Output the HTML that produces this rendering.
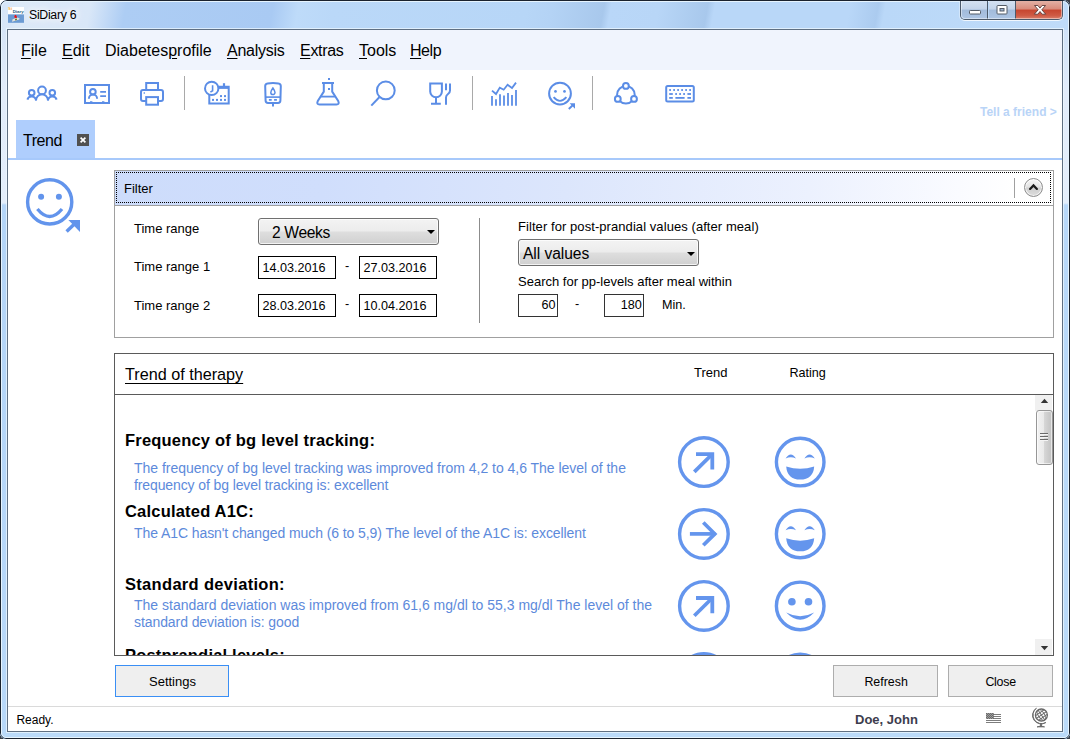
<!DOCTYPE html>
<html lang="en">
<head>
<meta charset="utf-8">
<title>SiDiary 6</title>
<style>
*{box-sizing:border-box;margin:0;padding:0}
html,body{width:1070px;height:739px;overflow:hidden;background:#fff}
body{position:relative;font-family:"Liberation Sans",sans-serif;color:#000;font-size:12px}
.abs,.t{position:absolute}
.t{white-space:nowrap;line-height:1;display:block}
#frame{position:absolute;left:0;top:0;width:1070px;height:739px;background:#b9d6f6;border-radius:7px 7px 6px 6px;overflow:hidden}
#frame .edge{position:absolute;left:0;top:0;right:0;bottom:0;border:1px solid #1a222e;border-radius:7px 7px 6px 6px}
#frame .edge2{position:absolute;left:1px;top:1px;right:1px;bottom:1px;border:1px solid #e6f4fe;border-radius:6px 6px 5px 5px}
#client{position:absolute;left:8px;top:30px;width:1054px;height:701px;background:#fff;outline:1px solid #5f6f82}
#menubar{position:absolute;left:0;top:0;width:1054px;height:40px;background:#f0f4fd}
.mi{font-size:16px;top:13px}
.mi u{text-decoration:underline;text-decoration-thickness:1px;text-underline-offset:2px}
.ico{position:absolute;overflow:visible}
.ico *{vector-effect:none}
.sep{position:absolute;width:1px;background:#a9a9a9;top:46px;height:34px}
.lbl{font-size:13px}
.inp{position:absolute;border:1px solid #000;background:#fff;height:23px}
.combo{position:absolute;border:1px solid #707070;border-radius:3px;background:linear-gradient(#f3f3f3 0%,#ececec 48%,#dedede 52%,#d0d0d0 100%);box-shadow:inset 0 0 0 1px rgba(255,255,255,.75)}
.combo i{position:absolute;width:0;height:0;border-left:4px solid transparent;border-right:4px solid transparent;border-top:4px solid #000}
.btn{position:absolute;border:1px solid #adadad;background:#efefef;height:32px}
.h{font-weight:bold;font-size:16.5px;letter-spacing:0.2px}
.b{font-size:14px;color:#5d8adb}
</style>
</head>
<body>
<div class="abs" style="left:1062px;top:0;width:8px;height:8px;background:#3a3f47"></div><div class="abs" style="left:0;top:731px;width:8px;height:8px;background:#3a3f47"></div><div class="abs" style="left:1062px;top:731px;width:8px;height:8px;background:#3a3f47"></div>
<div id="frame">
  <div class="abs" style="left:0;top:0;width:1070px;height:30px;background:linear-gradient(100deg,#d4e4f8 0px,#dce9f8 20px,#d9e7f8 90px,#adcdf4 125px,#a9caf3 270px,#bedbf9 295px,#bad8f8 330px,#b7d6f7 520px,#b4d3f5 545px,#a8c8ec 596px,#b9d7f8 603px,#b8d6f7 650px,#a8c8ec 698px,#b9d7f8 705px,#b9d7f8 838px,#abcbef 866px,#bad8f8 873px,#bfdbf9 1060px)"></div>
  <div class="abs" style="left:0;top:30px;width:8px;height:709px;background:linear-gradient(#d6e4f7 0,#e2ecf9 60px,#e3edfa 173px,#b4d5f8 175px,#b8d8f9 100%)"></div>
  <div class="abs" style="left:1062px;top:30px;width:8px;height:709px;background:linear-gradient(#d0e2f8 0,#e2ecfa 60px,#e4eefb 173px,#b8d8f9 175px,#badaf9 100%)"></div>
  <div class="abs" style="left:0;top:731px;width:1070px;height:8px;background:#badaf9"></div>
  <div class="abs" style="left:6px;top:28px;width:1058px;height:705px;border:1px solid rgba(240,250,255,.7)"></div>
  <div class="edge"></div><div class="edge2"></div>
</div>
<!-- title bar -->
<svg class="ico" style="left:8px;top:7px" width="16" height="16" viewBox="0 0 16 16">
  <rect x="0" y="0" width="16" height="7.4" fill="#fff"/>
  <rect x="0" y="7.4" width="16" height="8.4" fill="#6a9ad3"/>
  <text x="4.7" y="5.8" font-family="Liberation Sans, sans-serif" font-size="4.4" font-weight="bold" fill="#1d5a7c">Diary</text>
  <text x="0.1" y="3.2" font-family="Liberation Sans, sans-serif" font-size="4.2" font-weight="bold" fill="#f7ad3c">Si</text>
  <path d="M4 14.8 L4.6 12.2 L9.6 10.6 L11.6 11.4 L11.2 12.6 Z" fill="#e4e4e0"/>
  <path d="M7 12 L8.8 11.4 L9 13 L7.2 13.4 Z" fill="#6c7a28"/>
  <path d="M6.4 10.6 Q6 8.6 7.4 7.8 Q8.8 8.4 9 10.4 Q8 11.6 6.4 10.6 Z" fill="#f01010"/>
</svg>
<span class="t" id="title" style="left:29px;top:8.7px;font-size:12.3px;letter-spacing:-0.3px;text-shadow:0 0 6px #fff,0 0 10px #fff,0 0 14px #fff">SiDiary 6</span>
<div class="abs" style="left:960px;top:1px;width:103px;height:19px;border:1px solid #4c5a6b;border-top:none;border-radius:0 0 5px 5px;overflow:hidden;box-shadow:0 1px 0 rgba(255,255,255,.5),1px 1px 0 rgba(255,255,255,.35),-1px 1px 0 rgba(255,255,255,.35)">
  <div class="abs" style="left:0;top:0;width:27px;height:18px;background:linear-gradient(#d4e1f1 0,#c3d4ea 45%,#a2bbdb 50%,#adc5e4 100%);border-right:1px solid #4c5a6b"></div>
  <div class="abs" style="left:28px;top:0;width:27px;height:18px;background:linear-gradient(#d4e1f1 0,#c3d4ea 45%,#a2bbdb 50%,#adc5e4 100%);border-right:1px solid #4c5a6b"></div>
  <div class="abs" style="left:55px;top:0;width:47px;height:18px;background:linear-gradient(#e3b1a5 0,#d98b7b 45%,#c7452f 50%,#cf5a44 80%,#d9806c 100%)"></div>
  <div class="abs" style="left:0;top:-1px;width:101px;height:19px;box-shadow:inset 0 0 0 1px rgba(255,255,255,.45);border-radius:0 0 4px 4px"></div>
</div>
<svg class="ico" style="left:960px;top:0" width="103" height="20" viewBox="0 0 103 20">
  <rect x="9.5" y="10.5" width="11" height="3.5" rx="0.8" fill="#fff" stroke="#535b66" stroke-width="1"/>
  <rect x="37" y="5.5" width="10" height="8.5" rx="0.8" fill="#fff" stroke="#535b66" stroke-width="1"/>
  <rect x="40" y="8.5" width="4" height="2.5" fill="#9db4d2" stroke="#535b66" stroke-width="1"/>
  <path d="M74.5 5.5 h3.4 l2.1 2.6 l2.1 -2.6 h3.4 l-3.7 4.3 l3.9 4.4 h-3.5 l-2.2 -2.7 l-2.2 2.7 h-3.5 l3.9 -4.4 z" fill="#fff" stroke="#5a3a38" stroke-width="0.9" stroke-linejoin="round"/>
</svg>
<div id="client">
  <div id="menubar"></div>
</div>
<!--MENU-->
<span class="t mi" id="m1" style="left:21px;top:43px"><u>F</u>ile</span>
<span class="t mi" id="m2" style="left:62px;top:43px"><u>E</u>dit</span>
<span class="t mi" id="m3" style="left:105px;top:43px">Diabetes<u>p</u>rofile</span>
<span class="t mi" id="m4" style="left:227px;top:43px;letter-spacing:-0.26px"><u>A</u>nalysis</span>
<span class="t mi" id="m5" style="left:300px;top:43px;letter-spacing:-0.3px"><u>E</u>xtras</span>
<span class="t mi" id="m6" style="left:359px;top:43px"><u>T</u>ools</span>
<span class="t mi" id="m7" style="left:410px;top:43px;letter-spacing:-0.45px"><u>H</u>elp</span>
<!--TOOLBAR-->
<svg class="ico" style="left:0;top:70px" width="1070" height="50" viewBox="0 70 1070 50" fill="none" stroke="#5b8de6" stroke-width="2" stroke-linecap="butt" stroke-linejoin="miter">
  <!-- people -->
  <circle cx="42" cy="90.4" r="3.9"/>
  <path d="M36 100.6 a6 6.3 0 0 1 12 0"/>
  <circle cx="31.7" cy="92.7" r="2.8"/>
  <path d="M27.4 99.6 A4.4 4.4 0 0 1 36 100.4"/>
  <circle cx="52.3" cy="92.7" r="2.8"/>
  <path d="M56.6 99.6 A4.4 4.4 0 0 0 48 100.4"/>
  <!-- id card -->
  <rect x="85" y="85" width="24" height="18"/>
  <circle cx="92.9" cy="91.7" r="2.8"/>
  <path d="M88.9 98.8 a4.1 4.3 0 0 1 8.2 0"/>
  <path d="M100.2 91.8 h5.8 M100.2 96.1 h5.8" stroke-width="1.7"/>
  <path d="M90 102 h2.4 M102 102 h2.4" stroke-width="1.4"/>
  <!-- printer -->
  <rect x="146.2" y="83" width="11.8" height="7"/>
  <rect x="141" y="89.9" width="22" height="11.2" rx="2"/>
  <rect x="146.2" y="97.1" width="11.8" height="7.6" fill="#fff"/>
  <rect x="143.6" y="92.3" width="1.4" height="1.4" fill="#5b8de6" stroke="none"/>
  <!-- clock calendar -->
  <path d="M216 86.8 H228.7 V103.6 H209.3 V95"/>
  <path d="M217 87.6 H228.7" stroke-width="2.6"/>
  <path d="M224 83.2 v3" stroke-width="2.2"/>
  <circle cx="211.7" cy="88.4" r="6.7" fill="#fff"/>
  <path d="M212.6 85.3 v5.4 l-2.2 1.4" stroke-width="1.6"/>
  <g fill="#5b8de6" stroke="none">
    <rect x="220" y="95.1" width="2" height="2"/><rect x="224" y="95.1" width="2" height="2"/>
    <rect x="212" y="98.9" width="2" height="2"/><rect x="216" y="98.9" width="2" height="2"/><rect x="220" y="98.9" width="2" height="2"/><rect x="224" y="98.9" width="2" height="2"/>
  </g>
  <!-- glucose meter -->
  <path d="M265.2 86.2 Q265.2 84 267.4 83.6 Q273 82.4 278.6 83.6 Q280.8 84 280.8 86.2 L280.4 100.6 Q280.4 103 278 103 H268 Q265.6 103 265.6 100.6 Z"/>
  <path d="M265.6 97.1 H280.4" stroke-width="1.6"/>
  <path d="M273 103 v3.4" stroke-width="2"/>
  <path d="M272.9 88 Q275 91 275 92.5 A2.1 2.1 0 0 1 270.8 92.5 Q270.8 91 272.9 88 Z" stroke-width="1.5"/>
  <path d="M268.9 99.9 h2.8 M274.1 99.9 h2.8" stroke-width="1.8"/>
  <!-- flask -->
  <path d="M322 83 H334"/>
  <path d="M323.8 83 V91.6 L317.8 101 Q316.2 104.4 319.6 104.6 H336.4 Q339.8 104.4 338.2 101 L332.2 91.6 V83"/>
  <path d="M320.8 96.6 H335.2" stroke-width="1.8"/>
  <rect x="328" y="78" width="2" height="2" fill="#5b8de6" stroke="none"/>
  <rect x="328" y="88" width="2" height="2" fill="#5b8de6" stroke="none"/>
  <!-- magnifier -->
  <circle cx="385.8" cy="90.4" r="8.9"/>
  <path d="M379.3 97.3 L371.3 105.6"/>
  <!-- glass & fork -->
  <path d="M430.2 83.5 H441.9 V91.5 A5.85 5.85 0 0 1 430.2 91.5 Z"/>
  <path d="M436 97.4 V103 M431 103.7 H440.8"/>
  <path d="M446 83.4 V90.2" />
  <path d="M450 83.4 V90.4 Q450 92.6 448 94 Q446 95.4 446 97.4 V104.8"/>
  <!-- chart -->
  <g stroke-width="1.8">
    <path d="M492 96 V105.7 M496 99.2 V105.7 M500 94.2 V105.7 M504 95.5 V105.7 M508 93 V105.7 M512 95 V105.7 M516 90 V105.7"/>
  </g>
  <path d="M492 90.6 L496 94 L499.8 87.6 L503.7 89.7 L507.6 84.8 L512 88 L516 82.6" stroke-width="1.8"/>
  <!-- smiley small -->
  <circle cx="560" cy="93.6" r="10.9"/>
  <circle cx="555.5" cy="91.4" r="1.35" fill="#5b8de6" stroke="none"/>
  <circle cx="564.5" cy="91.4" r="1.35" fill="#5b8de6" stroke="none"/>
  <path d="M553.6 97.2 Q560 104.6 566.4 97.2" stroke-width="1.9"/>
  <path d="M569.6 103.2 H575 V108.8 Z" fill="#5b8de6" stroke="none"/>
  <path d="M568.8 109 L573.5 104.5" stroke-width="1.9"/>
  <!-- share -->
  <circle cx="625.9" cy="94.8" r="8.8"/>
  <circle cx="625.9" cy="85.9" r="2.9" fill="#fff"/>
  <circle cx="617.8" cy="98.9" r="2.9" fill="#fff"/>
  <circle cx="634" cy="98.9" r="2.9" fill="#fff"/>
  <!-- keyboard -->
  <rect x="666.2" y="86" width="27.6" height="15.6" rx="1.5"/>
  <g fill="#5b8de6" stroke="none">
    <rect x="669.2" y="89.1" width="1.8" height="1.8"/><rect x="673.2" y="89.1" width="1.8" height="1.8"/><rect x="677.2" y="89.1" width="1.8" height="1.8"/><rect x="681.2" y="89.1" width="1.8" height="1.8"/><rect x="685.2" y="89.1" width="1.8" height="1.8"/><rect x="689.2" y="89.1" width="1.8" height="1.8"/>
    <rect x="669.2" y="93.1" width="3.6" height="1.8"/><rect x="675.2" y="93.1" width="1.8" height="1.8"/><rect x="679.2" y="93.1" width="1.8" height="1.8"/><rect x="683.2" y="93.1" width="1.8" height="1.8"/><rect x="687.4" y="93.1" width="3.6" height="1.8"/>
    <rect x="669.2" y="97" width="3.6" height="1.8"/><rect x="675.4" y="97" width="9.2" height="1.8"/><rect x="687.4" y="97" width="3.6" height="1.8"/>
  </g>
</svg>
<div class="sep" style="left:184px;top:76px"></div>
<div class="sep" style="left:472px;top:76px"></div>
<div class="sep" style="left:592px;top:76px"></div>
<span class="t" id="tell" style="left:980px;top:106.4px;font-size:12px;font-weight:bold;color:#b9d4f7">Tell a friend &gt;</span>
<!--TAB-->
<div class="abs" style="left:16px;top:120px;width:79px;height:39px;background:#afcefd"></div>
<div class="abs" style="left:8px;top:158px;width:1054px;height:2px;background:#a7c9fb"></div>
<span class="t" id="tabt" style="left:23px;top:132.5px;font-size:16px;letter-spacing:-0.45px">Trend</span>
<div class="abs" style="left:77px;top:134px;width:12px;height:12px;background:#505050"></div>
<svg class="ico" style="left:77px;top:134px" width="12" height="12" viewBox="0 0 12 12"><path d="M3.6 3.6 L8.4 8.4 M8.4 3.6 L3.6 8.4" stroke="#fff" stroke-width="1.7"/></svg>
<svg class="ico" style="left:20px;top:172px" width="70" height="66" viewBox="20 172 70 66" fill="none" stroke="#6294ec" stroke-width="3.4">
  <circle cx="49.7" cy="201.9" r="22.1"/>
  <circle cx="41.1" cy="196.8" r="3" fill="#6294ec" stroke="none"/>
  <circle cx="58.9" cy="196.8" r="3" fill="#6294ec" stroke="none"/>
  <path d="M37.4 209 Q49.7 224 62 209" stroke-width="3.3"/>
  <path d="M68.4 220 H80 V232 Z" fill="#6294ec" stroke="none"/>
  <path d="M66.6 231.6 L76 222.6" stroke-width="3.4"/>
</svg>
<!--FILTER-->
<div class="abs" style="left:114px;top:170px;width:940px;height:168px;border:1px solid #a0a0a0;background:#fff"></div>
<div class="abs" style="left:115px;top:171px;width:938px;height:35px;background:linear-gradient(90deg,#cddcfb 0,#d0defc 22%,#dce6fc 48%,#ecf1fe 74%,#fafbff 90%,#fff 96%);border-bottom:1px solid #a0a0a0"></div>
<div class="abs" style="left:116px;top:172px;width:935px;height:31px;border:1px dotted #000"></div>
<span class="t" id="filt" style="left:124px;top:182px;font-size:13px">Filter</span>
<div class="abs" style="left:1014px;top:178px;width:1px;height:20px;background:#a0a0a0"></div>
<div class="abs" style="left:1024px;top:178px;width:19px;height:19px;border-radius:50%;border:1px solid #8e8e8e;background:linear-gradient(#f6f6f6 0,#e4e4e4 45%,#cfcfcf 55%,#dcdcdc 100%);box-shadow:inset 0 0 0 1px rgba(255,255,255,.7)"></div>
<svg class="ico" style="left:1024px;top:178px" width="19" height="19" viewBox="0 0 19 19"><path d="M6.1 10.9 L9.5 7.4 L12.9 10.9" fill="none" stroke="#1a1a1a" stroke-width="2.2" stroke-linecap="round"/></svg>

<span class="t lbl" id="l1" style="left:134px;top:222px">Time range</span>
<span class="t lbl" id="l2" style="left:134px;top:260px">Time range 1</span>
<span class="t lbl" id="l3" style="left:134px;top:299px">Time range 2</span>
<div class="combo" style="left:258px;top:218px;width:181px;height:27px"><i style="left:168px;top:11px"></i></div>
<span class="t" id="c1" style="left:272px;top:225px;font-size:15.6px;letter-spacing:-0.35px">2 Weeks</span>
<div class="inp" style="left:258px;top:256px;width:78px"></div>
<div class="inp" style="left:359px;top:256px;width:78px"></div>
<div class="inp" style="left:258px;top:294px;width:78px"></div>
<div class="inp" style="left:359px;top:294px;width:78px"></div>
<span class="t" id="d1" style="left:262.4px;top:261.6px;font-size:12.6px">14.03.2016</span>
<span class="t" id="d2" style="left:363.4px;top:261.6px;font-size:12.6px">27.03.2016</span>
<span class="t" id="d3" style="left:262.4px;top:299.7px;font-size:12.6px">28.03.2016</span>
<span class="t" id="d4" style="left:363.4px;top:299.7px;font-size:12.6px">10.04.2016</span>
<span class="t" id="h1" style="left:345px;top:260px;font-size:12.6px">-</span>
<span class="t" id="h2" style="left:345px;top:298px;font-size:12.6px">-</span>
<div class="abs" style="left:479px;top:218px;width:1px;height:105px;background:#8c8c8c"></div>
<span class="t lbl" id="l4" style="left:518px;top:220px;letter-spacing:0.07px">Filter for post-prandial values (after meal)</span>
<div class="combo" style="left:518px;top:239px;width:181px;height:27px"><i style="left:168px;top:12px"></i></div>
<span class="t" id="c2" style="left:523px;top:246px;font-size:15.6px;letter-spacing:-0.05px">All values</span>
<span class="t lbl" id="l5" style="left:518px;top:275px">Search for pp-levels after meal within</span>
<div class="inp" style="left:518px;top:294px;width:40px;border-color:#333"></div>
<div class="inp" style="left:604px;top:294px;width:40px;border-color:#333"></div>
<span class="t" id="n1" style="left:541.5px;top:299px;font-size:12.6px">60</span>
<span class="t" id="n2" style="left:620.8px;top:299px;font-size:12.6px">180</span>
<span class="t" id="h3" style="left:575px;top:298px;font-size:12.6px">-</span>
<span class="t lbl" id="l6" style="left:662px;top:299px;font-size:12.6px">Min.</span>
<!--TREND-->
<div class="abs" style="left:114px;top:353px;width:940px;height:303px;border:1px solid #5a5a5a;background:#fff;overflow:hidden"></div>
<div class="abs" style="left:115px;top:394px;width:938px;height:1px;background:#5a5a5a"></div>
<span class="t" id="tt" style="left:125px;top:366px;font-size:16.2px;text-decoration:underline;text-decoration-thickness:1px;text-underline-offset:2.6px;text-decoration-skip-ink:none">Trend of therapy</span>
<span class="t lbl" id="th1" style="left:694px;top:366px">Trend</span>
<span class="t lbl" id="th2" style="left:789.4px;top:366.5px;font-size:12.6px">Rating</span>
<div class="abs" style="left:115px;top:395px;width:938px;height:260px;overflow:hidden">
  <span class="t h" id="s1" style="left:10px;top:37px">Frequency of bg level tracking:</span>
  <span class="t b" id="b1" style="left:19px;top:66px;letter-spacing:-0.025px">The frequency of bg level tracking was improved from 4,2 to 4,6 The level of the</span>
  <span class="t b" id="b2" style="left:19px;top:83px;letter-spacing:-0.11px">frequency of bg level tracking is: excellent</span>
  <span class="t h" id="s2" style="left:10px;top:108px">Calculated A1C:</span>
  <span class="t b" id="b3" style="left:19px;top:131px;letter-spacing:-0.08px">The A1C hasn't changed much (6 to 5,9) The level of the A1C is: excellent</span>
  <span class="t h" id="s3" style="left:10px;top:181px;letter-spacing:0.31px">Standard deviation:</span>
  <span class="t b" id="b4" style="left:19px;top:203px">The standard deviation was improved from 61,6 mg/dl to 55,3 mg/dl The level of the</span>
  <span class="t b" id="b5" style="left:19px;top:220px;letter-spacing:-0.08px">standard deviation is: good</span>
  <span class="t h" id="s4" style="left:10px;top:252px">Postprandial levels:</span>
  <svg class="ico" style="left:0;top:0" width="938" height="320" viewBox="115 395 938 320" fill="none" stroke="#6495ed" stroke-width="3.4">
  <circle cx="703.9" cy="462.1" r="24.3"/><path d="M694.3 471.9 L711.5 454.9" stroke-width="3.7"/><path d="M696.0 454.2 H712.3 V469.5" stroke-width="3.8" stroke-linejoin="miter"/>
  <circle cx="800.2" cy="462.1" r="23.8"/>
  <path d="M786.2 466.40000000000003 Q800.2 471.3 814.2 466.40000000000003 Q813.2 479.5 800.2 479.5 Q787.2 479.5 786.2 466.40000000000003 Z" fill="#6495ed" stroke="none"/>
  <path d="M785.6 458.5 Q790.8000000000001 450.5 796.0 458.5 Q790.8000000000001 455.90000000000003 785.6 458.5 Z" fill="#6495ed" stroke="none"/>
  <path d="M804.4000000000001 458.5 Q809.6 450.5 814.8000000000001 458.5 Q809.6 455.90000000000003 804.4000000000001 458.5 Z" fill="#6495ed" stroke="none"/>
  <circle cx="703.9" cy="533.9" r="24.3"/><path d="M689.9 533.9 H715.4" stroke-width="3.7"/><path d="M703.3 522.5 L714.8 533.9 L703.3 545.3" stroke-width="3.7"/>
  <circle cx="800.2" cy="533.9" r="23.8"/>
  <path d="M786.2 538.1999999999999 Q800.2 543.1 814.2 538.1999999999999 Q813.2 551.3 800.2 551.3 Q787.2 551.3 786.2 538.1999999999999 Z" fill="#6495ed" stroke="none"/>
  <path d="M785.6 530.3 Q790.8000000000001 522.3 796.0 530.3 Q790.8000000000001 527.6999999999999 785.6 530.3 Z" fill="#6495ed" stroke="none"/>
  <path d="M804.4000000000001 530.3 Q809.6 522.3 814.8000000000001 530.3 Q809.6 527.6999999999999 804.4000000000001 530.3 Z" fill="#6495ed" stroke="none"/>
  <circle cx="703.9" cy="605.9" r="24.3"/><path d="M694.3 615.7 L711.5 598.7" stroke-width="3.7"/><path d="M696.0 598.0 H712.3 V613.3" stroke-width="3.8" stroke-linejoin="miter"/>
  <circle cx="800.2" cy="605.9" r="23.8"/>
  <circle cx="791.9000000000001" cy="601.6999999999999" r="3.8" fill="#6495ed" stroke="none"/><circle cx="808.5" cy="601.6999999999999" r="3.8" fill="#6495ed" stroke="none"/>
  <path d="M786.2 612.5 Q800.2 619.9 814.2 612.5 Q800.2 626.9 786.2 612.5 Z" fill="#6495ed" stroke="none"/>
  <circle cx="703.9" cy="677.9" r="24.3"/><path d="M694.3 687.7 L711.5 670.7" stroke-width="3.7"/><path d="M696.0 670.0 H712.3 V685.3" stroke-width="3.8" stroke-linejoin="miter"/>
  <circle cx="800.2" cy="677.9" r="23.8"/>
  <circle cx="791.9000000000001" cy="673.6999999999999" r="3.8" fill="#6495ed" stroke="none"/><circle cx="808.5" cy="673.6999999999999" r="3.8" fill="#6495ed" stroke="none"/>
  <path d="M786.2 684.5 Q800.2 691.9 814.2 684.5 Q800.2 698.9 786.2 684.5 Z" fill="#6495ed" stroke="none"/>
  </svg>
</div>
<!-- scrollbar -->
<div class="abs" style="left:1035px;top:395px;width:18px;height:260px;background:#fff"></div>
<div class="abs" style="left:1035px;top:395px;width:17px;height:16px;background:#f0f0f0"></div>
<div class="abs" style="left:1035px;top:639px;width:17px;height:16px;background:#f0f0f0"></div>
<svg class="ico" style="left:1036px;top:395px" width="17" height="260" viewBox="0 0 17 260">
  <path d="M4.8 8 L8.5 3.8 L12.2 8 Z" fill="#333"/>
  <path d="M4.8 251 L8.5 255.2 L12.2 251 Z" fill="#333"/>
</svg>
<div class="abs" style="left:1035.5px;top:410px;width:17px;height:55px;border:1px solid #979797;border-radius:3px;background:linear-gradient(90deg,#f3f3f3 0,#e9e9e9 45%,#d6d6d6 50%,#c2c2c2 100%);box-shadow:inset 0 0 0 1px rgba(255,255,255,.6)"></div>
<div class="abs" style="left:1040px;top:433px;width:8px;height:1px;background:#6a6a6a;box-shadow:0 3px 0 #6a6a6a,0 6px 0 #6a6a6a,0 1px 0 #f4f4f4,0 4px 0 #f4f4f4,0 7px 0 #f4f4f4"></div>
<!--BOTTOM-->
<div class="btn" style="left:115px;top:665px;width:114px;border-color:#3a8ff5"></div>
<div class="btn" style="left:833px;top:665px;width:105px"></div>
<div class="btn" style="left:948px;top:665px;width:105px"></div>
<span class="t" id="bt1" style="left:149px;top:675px;font-size:13px">Settings</span>
<span class="t" id="bt2" style="left:864.4px;top:675.8px;font-size:12.4px">Refresh</span>
<span class="t" id="bt3" style="left:985.4px;top:675.8px;font-size:12.4px;letter-spacing:-0.25px">Close</span>
<div class="abs" style="left:8px;top:706px;width:1054px;height:1px;background:#dadada"></div>
<span class="t" id="st1" style="left:16.4px;top:713.8px;font-size:12px">Ready.</span>
<span class="t" id="st2" style="left:855px;top:713px;font-size:13px;font-weight:bold;color:#3d3d4d">Doe, John</span>
<svg class="ico" style="left:986px;top:713px" width="16" height="11" viewBox="0 0 16 11" shape-rendering="crispEdges">
  <path d="M0 1.5 H15 M0 3.5 H15 M0 5.5 H15 M0 7.5 H15 M0 9.5 H15" stroke="#7d7d7d" stroke-width="1"/>
  <rect x="0" y="0" width="8" height="6" fill="#9c9c9c"/>
  <path d="M0 0.5 H8 M0 2.5 H8 M0 4.5 H8" stroke="#6a6a6a" stroke-width="1" stroke-dasharray="1 1"/>
  <path d="M1 1.5 H8 M1 3.5 H8 M1 5.5 H8" stroke="#6a6a6a" stroke-width="1" stroke-dasharray="1 1"/>
</svg>
<svg class="ico" style="left:1030px;top:706px" width="22" height="24" viewBox="1030 706 22 24" fill="none" stroke="#686868">
  <circle cx="1041.4" cy="715" r="6" fill="#fff" stroke-width="1.3"/>
  <g transform="rotate(-35 1041.4 715)" stroke-width="0.95">
    <path d="M1036.4 712.2 H1046.4 M1035.4 715 H1047.4 M1036.4 717.8 H1046.4"/>
    <ellipse cx="1041.4" cy="715" rx="3" ry="6"/>
    <path d="M1041.4 709 V721"/>
  </g>
  <path d="M1036.4 708.2 A8.6 8.6 0 0 0 1045.9 722.5 A7.4 7.4 0 0 1 1036.4 708.2 Z" fill="#686868" stroke-width="0.9" stroke-linejoin="round"/>
  <path d="M1041 723.4 V726" stroke-width="1.8"/>
  <path d="M1037 726.9 Q1040.8 725 1044.6 726.9 Z" fill="#686868" stroke-width="0.8"/>
</svg>
</body>
</html>
